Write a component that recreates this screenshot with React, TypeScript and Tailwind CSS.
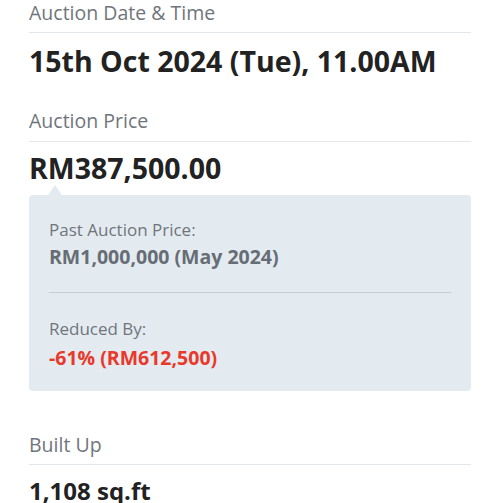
export default function App() {
  const font = { fontFamily: '"Open Sans", "Noto Sans", sans-serif' };
  return (
    <div className="w-[500px] h-[503px] overflow-hidden bg-white px-[29px]" style={font}>
      <div>
        <div className="text-[19.5px] leading-[26px] text-[#70757b] pb-[6px] border-b border-[#e3e6ec]">
          Auction Date &amp; Time
        </div>
        <div className="mt-[10px] text-[28.5px] leading-[36px] font-bold text-[#222222]">
          15th Oct 2024 (Tue), 11.00AM
        </div>

        <div className="mt-[29px] text-[19.5px] leading-[26px] text-[#70757b] pb-[7px] border-b border-[#e3e6ec]">
          Auction Price
        </div>
        <div className="mt-[8px] text-[28.5px] leading-[36px] font-bold text-[#222222]">
          RM387,500.00
        </div>

        <div className="relative mt-[9px] rounded-[4px] bg-[#e3ebf1] px-[20px] pt-[24px] pb-[20px]">
          <div className="absolute -top-[10px] left-[19px] w-0 h-0 border-l-[7px] border-r-[7px] border-b-[10px] border-l-transparent border-r-transparent border-b-[#e3ebf1]" />
          <div className="text-[17px] leading-[22px] text-[#70757b]">Past Auction Price:</div>
          <div className="mt-[3px] text-[19.5px] leading-[26px] font-bold text-[#676d75]">
            RM1,000,000 (May 2024)
          </div>
          <div className="mt-[22px] border-t border-[#c5ccd4]" />
          <div className="mt-[25px] text-[17px] leading-[22px] text-[#70757b]">Reduced By:</div>
          <div className="mt-[5px] text-[19.5px] leading-[26px] font-bold text-[#e8392b]">
            -61% (RM612,500)
          </div>
        </div>

        <div className="mt-[41px] text-[19.5px] leading-[26px] text-[#70757b] pb-[6px] border-b border-[#e3e6ec]">
          Built Up
        </div>
        <div className="mt-[10px] text-[24px] leading-[32px] font-bold text-[#222222]">
          1,108 sq.ft
        </div>
      </div>
    </div>
  );
}
